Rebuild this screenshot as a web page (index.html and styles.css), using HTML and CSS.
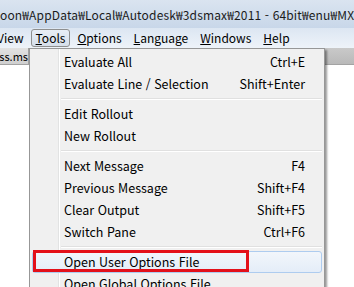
FILE: index.html
```html
<!DOCTYPE html>
<html lang="ko">

<head>
    <meta charset="UTF-8">
    <title>MAXScript Listener</title>
    <link rel="stylesheet" href="styles.css">
</head>

<body>
    <div class="window">
        <div class="title-bar">
            <span class="title-text">oon₩AppData₩Local₩Autodesk₩3dsmax₩2011 - 64bit₩enu₩MXS_Editor.properties</span>
        </div>
        <div class="menu-bar">
            <span class="menu-item first">View</span>
            <span class="menu-item open"><u>T</u>ools</span>
            <span class="menu-item"><u>O</u>ptions</span>
            <span class="menu-item"><u>L</u>anguage</span>
            <span class="menu-item"><u>W</u>indows</span>
            <span class="menu-item"><u>H</u>elp</span>
        </div>
        <div class="workspace">
            <div class="tab-strip">
                <span class="tab">ass.ms</span>
            </div>
            <div class="editor"></div>
        </div>

        <div class="dropdown">
            <div class="entry"><span>Evaluate All</span><span>Ctrl+E</span></div>
            <div class="entry"><span>Evaluate Line / Selection</span><span>Shift+Enter</span></div>
            <div class="sep"></div>
            <div class="entry"><span>Edit Rollout</span></div>
            <div class="entry"><span>New Rollout</span></div>
            <div class="sep"></div>
            <div class="entry"><span>Next Message</span><span>F4</span></div>
            <div class="entry"><span>Previous Message</span><span>Shift+F4</span></div>
            <div class="entry"><span>Clear Output</span><span>Shift+F5</span></div>
            <div class="entry"><span>Switch Pane</span><span>Ctrl+F6</span></div>
            <div class="sep"></div>
            <div class="entry hover"><span>Open User Options File</span></div>
            <div class="entry"><span>Open Global Options File</span></div>
        </div>

        <div class="callout"></div>
    </div>
</body>

</html>
```

FILE: styles.css
```css
body {
    margin: 0;
    font-family: "Noto Sans CJK KR", "Noto Sans", sans-serif;
    font-size: 12.5px;
    color: #000;
    background: #fff;
}

.window {
    position: relative;
    width: 354px;
    height: 287px;
    overflow: hidden;
}

.title-bar {
    height: 28px;
    display: flex;
    align-items: center;
    background: linear-gradient(to bottom, #dae4f0, #c8d7e9);
    white-space: nowrap;
    overflow: hidden;
}

.title-text {
    font-size: 12px;
    color: #1b1b1b;
    letter-spacing: 0.15px;
}

.menu-bar {
    height: 20px;
    display: flex;
    align-items: center;
    font-size: 12px;
    background: linear-gradient(to bottom, #dce6f2, #eef3f9);
    white-space: nowrap;
}

.menu-item {
    padding: 0 4px 1px;
    line-height: 15px;
    border: 1px solid transparent;
    border-radius: 3px;
    margin-right: 2px;
}

.menu-item.first {
    margin-left: -8px;
}

.menu-item.open {
    border-color: #8e8f8f;
    background: linear-gradient(to bottom, #e8eef6, #d6dfea);
}

.workspace {
    height: 239px;
    display: flex;
    flex-direction: column;
}

.tab-strip {
    height: 16px;
    display: flex;
    background: linear-gradient(to bottom, #c9c9c9, #b9b9b9);
    border-bottom: 1px solid #a3a3a3;
}

.tab {
    width: 28px;
    overflow: hidden;
    direction: rtl;
    font-size: 11px;
    line-height: 16px;
    background: linear-gradient(to bottom, #e2e2e2, #cfcfcf);
    border-right: 1px solid #a0a0a0;
}

.editor {
    flex: 1;
    background: #fff;
}

.dropdown {
    position: absolute;
    left: 29px;
    top: 48px;
    width: 290px;
    padding: 2px;
    border: 1px solid #979797;
    background: linear-gradient(to right, transparent 28px, #e2e3e3 28px, #e2e3e3 29px, #fff 29px, #fff 30px, transparent 30px), #f0f0f0;
    box-shadow: 2px 2px 2px rgba(0, 0, 0, 0.4);
}

.entry {
    height: 22px;
    display: flex;
    justify-content: space-between;
    align-items: center;
    padding: 0 16px 2px 31px;
    border: 1px solid transparent;
    box-sizing: border-box;
    border-radius: 3px;
}

.entry.hover {
    border-color: #aeccef;
    background: linear-gradient(to bottom, #f2f6fb, #e4edf8);
}

.sep {
    height: 8px;
    margin-left: 29px;
    background: linear-gradient(to bottom, transparent 3px, #e0e0e0 3px, #e0e0e0 4px, #fff 4px, #fff 5px, transparent 5px);
}

.callout {
    position: absolute;
    left: 33px;
    top: 250px;
    width: 210px;
    height: 16px;
    border: 3px solid #e3101a;
}
```
